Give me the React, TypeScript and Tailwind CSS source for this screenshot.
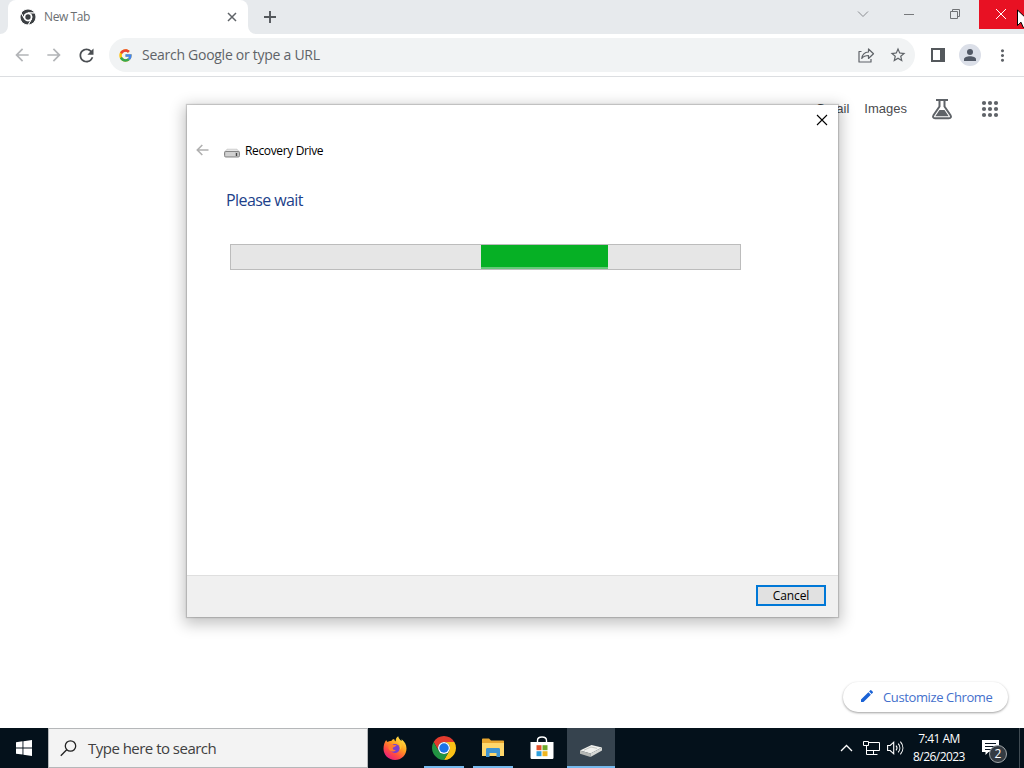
import type { ReactNode } from "react";
import { MdArrowBack, MdArrowForward, MdEdit, MdMoreVert, MdRefresh, MdStarBorder } from "react-icons/md";

const appDots = [3, 9, 15];

function ChromeLogo({ size, mono }: { size: number; mono?: boolean }) {
  const [red, yellow, green, blue] = mono
    ? ["#3c4043", "#3c4043", "#3c4043", "#3c4043"]
    : ["#e33b2e", "#fbc116", "#229342", "#1a73e8"];
  const gap = mono ? { stroke: "#fff", strokeWidth: 3 } : {};
  return (
    <svg width={size} height={size} viewBox="0 0 48 48">
      <path fill={red} {...gap} d="M24 12h20.78A24 24 0 0 0 3.22 12l10.39 18A12 12 0 0 1 24 12z" />
      <path fill={yellow} {...gap} d="M34.39 30 24 48a24 24 0 0 0 20.78-36H24a12 12 0 0 1 10.39 18z" />
      <path fill={green} {...gap} d="M13.61 30 3.22 12A24 24 0 0 0 24 48l10.39-18a12 12 0 0 1-20.78 0z" />
      <circle cx="24" cy="24" r="12" fill="#fff" />
      <circle cx="24" cy="24" r={mono ? 8 : 9.5} fill={blue} />
    </svg>
  );
}

function GoogleG() {
  return (
    <svg width="13" height="13" viewBox="3 3 42 42">
      <path fill="#FFC107" d="M43.6 20H24v8h11.3c-1.6 4.7-6.1 8-11.3 8-6.6 0-12-5.4-12-12s5.4-12 12-12c3.1 0 5.8 1.2 8 3l5.7-5.7C34 6.1 29.3 4 24 4 13 4 4 13 4 24s9 20 20 20 20-9 20-20c0-1.3-.1-2.7-.4-4z" />
      <path fill="#EA4335" d="m6.3 14.7 6.6 4.8C14.7 15.1 19 12 24 12c3.1 0 5.8 1.2 8 3l5.7-5.7C34 6.1 29.3 4 24 4 16.3 4 9.7 8.3 6.3 14.7z" />
      <path fill="#34A853" d="M24 44c5.2 0 9.9-2 13.4-5.2l-6.2-5.2C29.2 35.1 26.7 36 24 36c-5.2 0-9.6-3.3-11.3-7.900l-6.500 5C9.500 39.600 16.200 44 24 44z" />
      <path fill="#4285F4" d="M43.600 20H24v8h11.300c-.8 2.200-2.200 4.200-4.100 5.600l6.200 5.200C37 39.200 44 34 44 24c0-1.300-.1-2.700-.4-4z" />
    </svg>
  );
}

function TabStrip() {
  return (
    <div className="relative flex h-[34px] shrink-0 bg-[#e7eaed] pl-2">
      <div className="relative flex w-60 items-center rounded-t-lg bg-white pl-[12px] pr-2">
        <ChromeLogo size={16} mono />
        <span className="ml-2 flex-1 text-[12px] tracking-[-0.4px] text-[#6b6f73]">New Tab</span>
        <svg width="16" height="16" viewBox="0 0 16 16" stroke="#5f6368" strokeWidth="1.5">
          <path d="m4 4 8 8M12 4l-8 8" />
        </svg>
        <svg className="absolute -left-2 bottom-0" width="8" height="8" fill="#fff">
          <path d="M8 0v8H0a8 8 0 0 0 8-8z" />
        </svg>
        <svg className="absolute -right-2 bottom-0" width="8" height="8" fill="#fff">
          <path d="M0 0v8h8a8 8 0 0 1-8-8z" />
        </svg>
      </div>
      <svg className="ml-[15px] mt-[10px]" width="14" height="14" stroke="#54585c" strokeWidth="1.9">
        <path d="M7 1v12M1 7h12" />
      </svg>
      <div className="ml-auto flex h-[29px]">
        <div className="flex w-[46px] items-center justify-center pb-0.5 pr-0.5">
          <svg width="12" height="8" fill="none" stroke="#8a8d91">
            <path d="m1 1.500 5 5 5-5" />
          </svg>
        </div>
        <div className="flex w-[46px] items-center justify-center pb-0.5 pr-0.5">
          <svg width="12" height="8" stroke="#77797c">
            <path d="M1 4.500h10" />
          </svg>
        </div>
        <div className="flex w-[46px] items-center justify-center pb-0.5 pr-0.5">
          <svg width="12" height="12" fill="none" stroke="#707376">
            <path d="M1.500 3.500h7v7h-7zM3.500 3.500v-2h7v7h-2" />
          </svg>
        </div>
        <div className="flex w-[45px] items-center justify-center bg-[#e81123] pb-0.5 pr-0.5">
          <svg width="12" height="12" stroke="#fff">
            <path d="m1 1 10 10M11 1 1 11" />
          </svg>
        </div>
      </div>
      <svg className="absolute right-0 top-[9px] z-20" width="7" height="19" viewBox="0 0 7 19" fill="#fff" stroke="#000">
        <path d="M.5 1v15.500l3.500-3.300 2.200 5.200L12 18V12L.5 1z" />
      </svg>
    </div>
  );
}

function Toolbar() {
  return (
    <div className="flex h-[43px] shrink-0 items-center border-b border-[#dcdee1] bg-white pl-3 text-[#5f6368]">
      <MdArrowBack size={20} className="text-[#b3b5b8]" />
      <MdArrowForward size={20} className="ml-3 text-[#b3b5b8]" />
      <MdRefresh size={21} className="ml-3 text-[#4b4f53]" />
      <div className="ml-3 flex h-[34px] w-[806px] items-center rounded-full bg-[#f1f3f4] pl-[10px] pr-2">
        <GoogleG />
        <span className="ml-[10px] flex-1 pb-px text-[14px] tracking-[-0.27px]">Search Google or type a URL</span>
        <svg width="18" height="18" viewBox="0 0 18 18" fill="none" stroke="#5f6368" strokeWidth="1.2" strokeLinejoin="round">
          <path d="M4.500 5.500H2v10.500h12V13" />
          <path d="M11.500 3v3C7.500 6.300 5.200 9 4.800 12.500c1.600-2.200 3.700-3 6.700-3v3l5-4.800z" />
        </svg>
        <MdStarBorder size={18} className="ml-[14px]" />
      </div>
      <svg className="ml-4" width="14" height="14" viewBox="0 0 14 14">
        <path fill="#54585c" fillRule="evenodd" d="M0 0h14v14H0zM2 2v10h7V2z" />
      </svg>
      <div className="ml-[14px] flex size-[22px] items-center justify-center rounded-full bg-[#dbdfe8]">
        <svg width="14" height="14" viewBox="0 0 14 14" fill="#515865">
          <circle cx="7" cy="4" r="3" />
          <path d="M1 13v-1.700C1 9.300 4 8.300 7 8.300s6 1 6 3V13z" />
        </svg>
      </div>
      <MdMoreVert size={19} className="ml-3" />
    </div>
  );
}

function NewTabPage() {
  return (
    <div className="flex flex-1 flex-col justify-between bg-white">
      <div
        className="flex items-center justify-end pr-[25px] pt-5 text-[13px] text-[#4a4b4e]"
        style={{ fontFamily: '"Liberation Sans", Arial, sans-serif' }}>
        <span>Gmail</span>
        <span className="ml-[15px]">Images</span>
        <svg className="ml-6" width="22" height="24" viewBox="0 0 22 24" fill="none" stroke="#5f6368" strokeWidth="2">
          <path d="M5 3h12M8.500 3v6.500L2.500 18.200c-1 1.700-.3 3.100 1.500 3.100h14c1.800 0 2.500-1.400 1.500-3.100l-6-8.700V3" />
          <path d="M8.500 13h5l4.200 6.300H4.300z" fill="#5f6368" stroke="none" />
        </svg>
        <svg className="ml-[28px]" width="18" height="18" viewBox="0 0 18 18" fill="#5f6368">
          {appDots.map((y) => appDots.map((x) => <circle key={`${x}-${y}`} cx={x} cy={y} r="2.1" />))}
        </svg>
      </div>
      <div className="mb-4 mr-4 flex h-[30px] w-[165px] items-center self-end rounded-full bg-white pl-[16px] text-[13px] tracking-[-0.38px] text-[#4470cc] shadow-[0_1px_3px_0_rgba(0,0,0,0.2),0_1px_2px_rgba(0,0,0,0.2)]">
        <MdEdit size={16} className="mb-0.5 mr-2 shrink-0 text-[#1a62d6]" />
        <span className="whitespace-nowrap pt-px">Customize Chrome</span>
      </div>
    </div>
  );
}

function RecoveryDialog() {
  return (
    <div className="absolute left-[187px] top-[105px] flex h-[512px] w-[651px] flex-col bg-white shadow-[0_0_1px_1px_rgba(0,0,0,0.16),0_4px_14px_3px_rgba(0,0,0,0.24)]">
      <div className="flex h-[30px] justify-end pr-[10px] pt-[9px]">
        <svg width="12" height="12" stroke="#000" strokeWidth="1.1">
          <path d="m1 1 10 10M11 1 1 11" />
        </svg>
      </div>
      <div className="flex h-8 items-center pl-[9px]">
        <svg className="mb-0.5" width="13" height="12" fill="none" stroke="#b0b0b0" strokeWidth="1.6">
          <path d="M12.500 6H1.500M6.300 1 1.300 6l5 5" />
        </svg>
        <svg className="ml-[15px] mt-[4px]" width="16" height="10" viewBox="0 0 16 10">
          <path d="M3 1.200h10L15.500 4H.5z" fill="#e6e6e6" stroke="#b9b9b9" strokeWidth=".6" />
          <rect x=".5" y="3.500" width="15" height="5.500" rx="1.300" fill="#c4c4c4" stroke="#858585" />
          <path d="M2 5h9M2 7h9" stroke="#ddd" />
          <path d="M12.500 5v3" stroke="#444" strokeWidth="1.3" />
        </svg>
        <span className="ml-[5px] text-[12px] tracking-[-0.36px] text-black">Recovery Drive</span>
      </div>
      <h1 className="mt-[21px] pl-[39px] text-[16px] leading-6 tracking-[-0.58px] text-[#1c3f8a]">
        Please wait
      </h1>
      <div className="ml-[43px] mt-8 h-[26px] w-[511px] border border-[#bcbcbc] bg-[#e6e6e6] pl-[250px]">
        <div className="h-6 w-[127px] border-b-2 border-[#65c978] bg-[#06b025]" />
      </div>
      <div className="mt-auto flex h-[42px] items-start justify-end border-t border-[#dfdfdf] bg-[#f0f0f0] pr-3 pt-[9px]">
        <button className="h-[21px] w-[70px] border-2 border-[#0078d7] bg-[#e1e1e1] text-[12px] leading-[17px] tracking-[-0.12px] text-black">
          Cancel
        </button>
      </div>
    </div>
  );
}

function TaskItem({ children, running, active }: { children: ReactNode; running?: boolean; active?: boolean }) {
  return (
    <div className={`relative flex h-10 w-12 items-center justify-center ${active ? "bg-[#36434e]" : ""}`}>
      {children}
      {(running || active) && (
        <div className={`absolute bottom-0 h-0.5 bg-[#76b9ed] ${active ? "inset-x-0" : "inset-x-1"}`} />
      )}
    </div>
  );
}

function Firefox() {
  return (
    <svg width="24" height="24" viewBox="0 0 24 24">
      <defs>
        <linearGradient id="fox" x1=".85" y1="0" x2=".2" y2="1">
          <stop offset="0" stopColor="#fff44f" />
          <stop offset=".4" stopColor="#ffa01e" />
          <stop offset=".7" stopColor="#ff4b42" />
          <stop offset="1" stopColor="#e31587" />
        </linearGradient>
      </defs>
      <path fill="url(#fox)" d="M3.200 4c.3 1 .8 1.600 1.400 2C6 5 7.200 4.800 8.300 4.900 9 3.800 10 3.200 11.300 3c-.2 1 .2 1.700 1.500 2.400-.4-2.200.5-4 2.400-5.200.3 2.500 2 3.500 3.500 4.900-.1-.7-.2-1.200-.1-1.900 3 2.300 4.900 5.500 4.900 9.200C23.500 18.800 18.500 24 12 24S.5 19 .5 12.800C.5 9.200 1.600 6.200 3.200 4z" />
      <circle cx="12" cy="12.500" r="4.600" fill="#7b3fd0" />
      <path fill="#ff7a30" d="M5.500 8.500c2-1.200 3.500-.8 4.500.5h3.500c-.1 1.600-3.200 1.900-3.700 3.100-.3 1.500 1.300 2.400 3 1.800-1.800 2.600-6.200 1.900-7.300-1.400z" />
      <path fill="#ffc42f" d="M13.700 5.700c3.300 1.500 4.200 4.500 3 8.300 2.500-2 2.700-5.700.6-8.700z" />
    </svg>
  );
}

function Taskbar() {
  return (
    <div className="flex h-10 shrink-0 bg-[#04111b] text-white">
      <div className="flex w-12 items-center justify-center">
        <svg width="16" height="16" viewBox="0 0 16 16" fill="#fff">
          <path d="M0 2.200 6.500 1.300v6.200H0zM7.400 1.200 16 0v7.500H7.400zM0 8.400h6.500v6.200L0 13.700zM7.400 8.400H16V16l-8.600-1.200z" />
        </svg>
      </div>
      <div className="flex w-80 items-center border border-[#b5b7b9] bg-[#f3f3f3] pl-[11px] text-[#404040]">
        <svg width="17" height="17" viewBox="0 0 17 17" fill="none" stroke="#222" strokeWidth="1.3">
          <circle cx="10.500" cy="6" r="5.200" />
          <path d="M6.700 9.700.8 15.700" />
        </svg>
        <span className="ml-[11px] text-[15px] tracking-[-0.52px]">Type here to search</span>
      </div>
      <div className="ml-[3px] flex gap-px">
        <TaskItem>
          <Firefox />
        </TaskItem>
        <TaskItem running>
          <ChromeLogo size={24} />
        </TaskItem>
        <TaskItem running>
          <svg width="22" height="20" viewBox="0 0 22 20">
            <path fill="#e8a62f" d="M0 1.500C0 .7.500.5 1 .5h6l2 2h12c.6 0 1 .3 1 1V18H0z" />
            <path fill="#ffd76b" d="M0 5h22v13H0z" />
            <path fill="#3f94d1" d="M4 19V11.500c0-1 .5-1.500 1.500-1.500h11c1 0 1.500.5 1.500 1.500V19h-3.500v-4h-7v4z" />
          </svg>
        </TaskItem>
        <TaskItem>
          <svg width="24" height="24" viewBox="0 0 24 24">
            <path d="M7.500 7V4.500C7.500 2.500 9 1 12 1s4.500 1.500 4.500 3.500V7" fill="none" stroke="#fff" strokeWidth="1.4" />
            <path fill="#fff" d="M.5 6h23v15.500c0 1-.7 1.500-1.500 1.500H2c-.8 0-1.500-.5-1.500-1.500z" />
            <path fill="#e3512b" d="M6.500 9.200h5v5h-5z" />
            <path fill="#6fa92b" d="M12.500 9.200h5v5h-5z" />
            <path fill="#2c9fdc" d="M6.500 15.200h5v5h-5z" />
            <path fill="#f0b51f" d="M12.500 15.200h5v5h-5z" />
          </svg>
        </TaskItem>
        <TaskItem active>
          <svg className="mt-1.5" width="24" height="14" viewBox="0 0 24 14">
            <path fill="#f1f1ee" d="M1 6.500 12.500 1 23 3.500 11.500 9.500z" />
            <path fill="#b6b8b5" d="M1 6.500 11.500 9.500V13L1 9.800z" />
            <path fill="#d5d7d4" d="M11.500 9.500 23 3.500v3L11.500 13z" />
            <path d="m5 6.200 7-3.200 6 1.400" fill="none" stroke="#c5c7c3" />
          </svg>
        </TaskItem>
      </div>
      <div className="ml-auto flex items-center">
        <svg width="13" height="8" fill="none" stroke="#fff" strokeWidth="1.3">
          <path d="m1 7 5.500-5.500L12 7" />
        </svg>
        <svg className="ml-[10px]" width="17" height="16" fill="none" stroke="#fff">
          <path d="M5.500 2.500h11v8H3.500v-4M10.500 10.500v4M6 14.500h8.500M3.500 5.500v9h3M.5 1.500h5v4h-5z" />
        </svg>
        <svg className="ml-[7px]" width="17" height="16" fill="none" stroke="#fff" strokeWidth="1.1">
          <path d="M.6 5.500h2.600l3.500-3.300v11.600l-3.500-3.300H.6zM9 5.700c1.200 1.400 1.200 3.200 0 4.600M11.200 3.700c2.200 2.500 2.200 6.100 0 8.600M13.400 1.700c3.300 3.800 3.300 8.800 0 12.600" />
        </svg>
        <div className="ml-[6px] w-[58px] text-center text-[12px] leading-[18px] tracking-[-0.55px]">
          <div>7:41 AM</div>
          <div>8/26/2023</div>
        </div>
        <div className="relative ml-[14px] h-6 w-6">
          <svg width="17" height="17" className="mt-1" viewBox="0 0 17 17">
            <path fill="#fff" d="M0 0h17v12H6.500L3.500 15v-3H0z" />
            <path d="M3 3.500h11M3 6.500h11M3 9.500h8" stroke="#071420" />
          </svg>
          <span className="absolute left-[7px] top-[9px] flex size-[18px] items-center justify-center rounded-full border border-[#a2a7aa] bg-[#343b42] text-[12px] leading-none">
            2
          </span>
        </div>
        <div className="ml-[13px] h-10 w-px bg-[#404b53]" />
        <div className="w-1" />
      </div>
    </div>
  );
}

export default function App() {
  return (
    <div
      className="relative flex h-[768px] w-[1024px] flex-col overflow-hidden"
      style={{ fontFamily: '"Open Sans", "Noto Sans", sans-serif' }}>
      <TabStrip />
      <Toolbar />
      <NewTabPage />
      <RecoveryDialog />
      <Taskbar />
    </div>
  );
}
